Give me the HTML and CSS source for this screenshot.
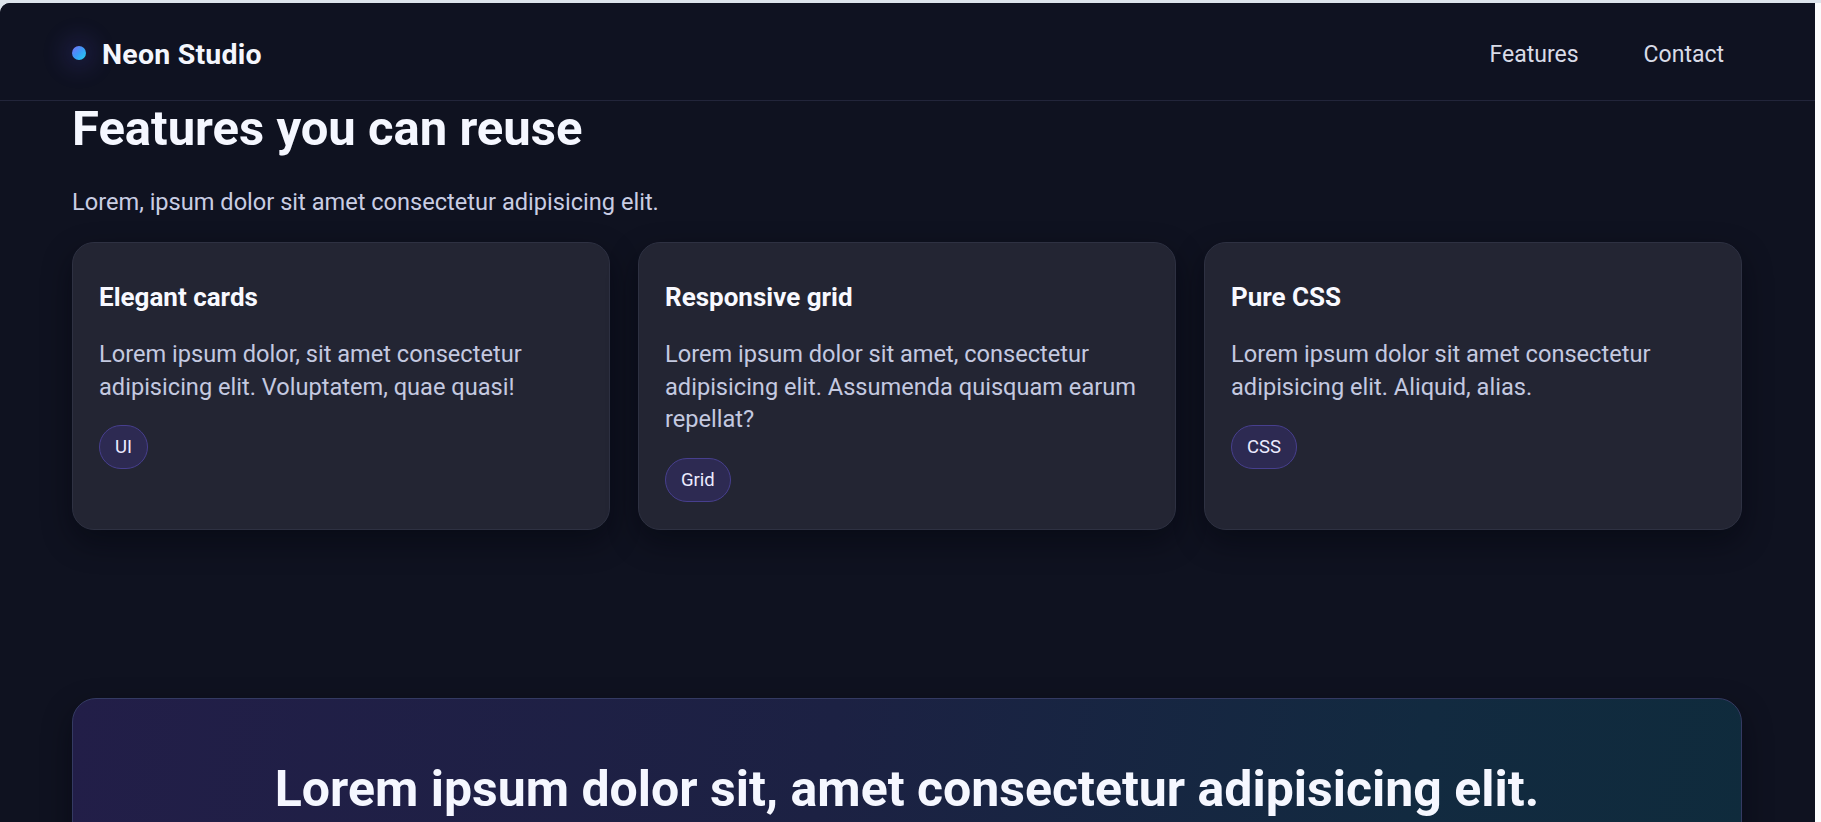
FILE: index.html
```html
<!DOCTYPE html>
<html lang="en">
<head>
<meta charset="utf-8">
<title>Neon Studio</title>
<link rel="stylesheet" href="styles.css">
</head>
<body>
<div class="frame">
  <div class="viewport">
    <header class="nav">
      <div class="brand"><span class="brand-dot"></span><span class="brand-name">Neon Studio</span></div>
      <nav class="links">
        <a href="#features">Features</a>
        <a href="#contact">Contact</a>
      </nav>
    </header>
    <main class="container">
      <section class="features" id="features">
        <h2 class="section-title">Features you can reuse</h2>
        <p class="section-sub">Lorem, ipsum dolor sit amet consectetur adipisicing elit.</p>
        <div class="grid">
          <article class="card">
            <h3>Elegant cards</h3>
            <p>Lorem ipsum dolor, sit amet consectetur adipisicing elit. Voluptatem, quae quasi!</p>
            <span class="tag">UI</span>
          </article>
          <article class="card">
            <h3>Responsive grid</h3>
            <p>Lorem ipsum dolor sit amet, consectetur adipisicing elit. Assumenda quisquam earum repellat?</p>
            <span class="tag">Grid</span>
          </article>
          <article class="card">
            <h3>Pure CSS</h3>
            <p>Lorem ipsum dolor sit amet consectetur adipisicing elit. Aliquid, alias.</p>
            <span class="tag">CSS</span>
          </article>
        </div>
      </section>
      <section class="cta" id="contact">
        <h2>Lorem ipsum dolor sit, amet consectetur adipisicing elit.</h2>
      </section>
    </main>
  </div>
  <div class="gutter"></div>
</div>
</body>
</html>
```
FILE: styles.css
```css
* { box-sizing: border-box; }
html, body { margin: 0; padding: 0; }
body {
  background: #dde4ec;
  font-family: Roboto, "Noto Sans", "Liberation Sans", sans-serif;
  height: 822px;
  overflow: hidden;
}
.frame {
  display: flex;
  height: 822px;
  padding-top: 3px;
}
.viewport {
  flex: 1;
  background: #0f1220;
  border-top-left-radius: 10px;
  overflow: hidden;
  height: 819px;
}
.gutter {
  width: 6px;
  background: #fbfcfd;
}
.nav {
  height: 98px;
  border-bottom: 1px solid #22253a;
  background: #0f1221;
  display: flex;
  align-items: center;
  justify-content: space-between;
  padding: 6px 91px 0 72px;
}
.brand {
  display: flex;
  align-items: center;
  gap: 16px;
}
.brand-dot {
  width: 14px;
  height: 14px;
  margin-bottom: 4px;
  border-radius: 50%;
  background: linear-gradient(135deg, #7b6cf6 0%, #3b9cf7 50%, #22d3ee 100%);
  box-shadow: 0 0 22px 10px rgba(88, 76, 210, 0.16);
}
.brand-name {
  color: #f4f6fd;
  font-weight: 700;
  font-size: 28.5px;
  letter-spacing: 0.2px;
}
.links {
  display: flex;
  gap: 65px;
}
.links a {
  color: #d8dbe7;
  text-decoration: none;
  font-size: 23px;
}
.container {
  margin-left: 72px;
  width: 1670px;
}
.section-title {
  margin: 0;
  color: #f5f7ff;
  font-size: 49px;
  line-height: 55px;
  font-weight: 700;
}
.section-sub {
  margin: 30px 0 0;
  color: #c9cde3;
  font-size: 23.6px;
  line-height: 32px;
}
.grid {
  margin-top: 24px;
  display: grid;
  grid-template-columns: repeat(3, 1fr);
  gap: 28px;
}
.card {
  background: #232533;
  border: 1px solid #2e3142;
  border-radius: 22px;
  padding: 39px 26px 27px;
  box-shadow: 0 12px 30px rgba(3, 4, 12, 0.45);
}
.card h3 {
  margin: 0;
  color: #f8f9ff;
  font-size: 26px;
  line-height: 30px;
  font-weight: 700;
}
.card p {
  margin: 26px 0 22px;
  color: #c4c9e0;
  font-size: 23.6px;
  line-height: 32.5px;
}
.tag {
  display: inline-block;
  padding: 9px 15px;
  font-size: 18.5px;
  line-height: 24px;
  color: #ecebff;
  background: #2d2a52;
  border: 1px solid #473f8e;
  border-radius: 999px;
}
.cta {
  margin-top: 168px;
  border: 1px solid #343a62;
  border-radius: 24px;
  background: linear-gradient(100deg, #221e48 0%, #1c2143 45%, #122a40 80%, #0f2b3c 100%);
  padding: 61px 40px;
  box-shadow: 0 12px 30px rgba(3, 4, 12, 0.45);
}
.cta h2 {
  margin: 0;
  text-align: center;
  color: #f5f7ff;
  font-size: 50px;
  line-height: 58px;
  font-weight: 700;
}
```
